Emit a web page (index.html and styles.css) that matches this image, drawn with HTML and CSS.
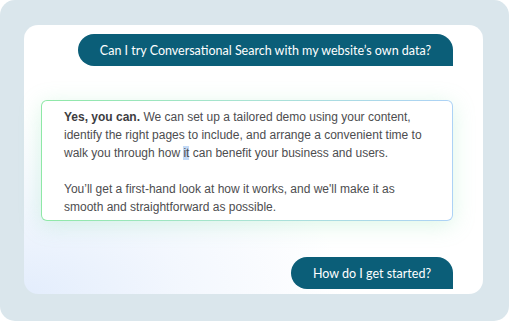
FILE: index.html
```html
<!DOCTYPE html>
<html lang="en">
<head>
    <meta charset="UTF-8">
    <meta name="viewport" content="width=device-width, initial-scale=1.0">
    <title>Conversational Search</title>
    <link rel="stylesheet" href="styles.css">
</head>
<body>
    <div class="frame">
        <div class="chat">
            <div class="bubble">Can I try Conversational Search with my website’s own data?</div>

            <div class="answer">
                <p><strong>Yes, you can.</strong> We can set up a tailored demo using your content, identify the right pages to include, and arrange a convenient time to walk you through how <span class="selected">it</span> can benefit your business and users.</p>
                <p>You’ll get a first-hand look at how it works, and we'll make it as smooth and straightforward as possible.</p>
            </div>

            <div class="bubble">How do I get started?</div>
        </div>
    </div>
</body>
</html>
```

FILE: styles.css
```css
* {
    margin: 0;
    padding: 0;
    box-sizing: border-box;
}

body {
    background: #ffffff;
    width: 509px;
    height: 321px;
    overflow: hidden;
    -webkit-font-smoothing: antialiased;
}

.frame {
    width: 509px;
    height: 321px;
    background: #dae6ec;
    border-radius: 15px;
    padding: 25px 26px 27px 24px;
}

.chat {
    height: 100%;
    border-radius: 14px;
    background:
        radial-gradient(ellipse 320px 180px at 0% 100%, #e3edfc 0%, rgba(235, 242, 253, 0.6) 50%, rgba(255, 255, 255, 0) 100%),
        #ffffff;
    padding: 9px 30px 0 17px;
    display: flex;
    flex-direction: column;
    align-items: flex-end;
}

.bubble {
    flex-shrink: 0;
    height: 32px;
    display: flex;
    align-items: center;
    padding: 0 22px;
    background: #0b5e78;
    color: #ffffff;
    font-family: "Lato", sans-serif;
    font-size: 12.5px;
    border-radius: 16px 16px 0 16px;
}

.answer {
    flex-shrink: 0;
    align-self: stretch;
    margin: 34px 0 36px;
    padding: 7px 20px 4px 22px;
    border: 1.5px solid transparent;
    border-radius: 6px;
    background:
        linear-gradient(#ffffff, #ffffff) padding-box,
        linear-gradient(90deg, #8ee8a6 0%, #a9e3d3 50%, #add2f6 100%) border-box;
    box-shadow: 0 4px 22px rgba(130, 225, 170, 0.28);
    font-family: "Liberation Sans", Arial, sans-serif;
    font-size: 12px;
    line-height: 18px;
    color: #4d4d4f;
}

.answer p + p {
    margin-top: 18px;
}

.answer strong {
    color: #3d3d3f;
}

.selected {
    background: #c3daf7;
}
```
